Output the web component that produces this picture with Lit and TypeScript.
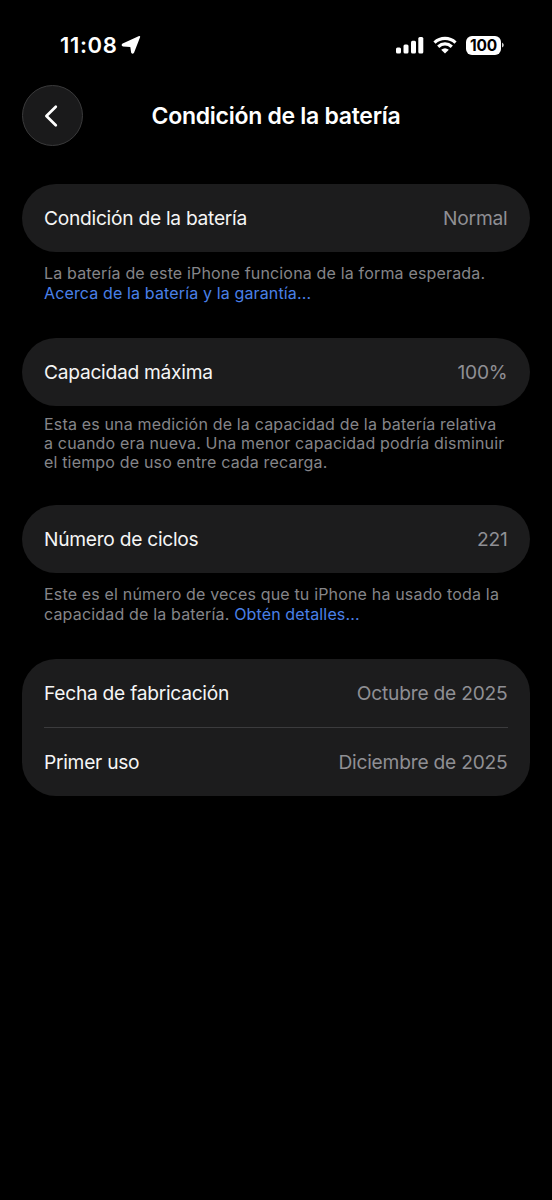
import { LitElement, html, css, nothing } from "lit";
import { customElement, property } from "lit/decorators.js";

const font = css`"Inter", "Liberation Sans", sans-serif`;

@customElement("status-bar")
class StatusBar extends LitElement {
  static styles = css`
    :host { display: flex; justify-content: space-between; align-items: center; height: 20px; padding: 35px 48px 0 60px; font-family: ${font}; color: #fff; }
    .left, .right { display: flex; align-items: center; }
    .time { font-size: 22px; line-height: 20px; font-weight: 600; letter-spacing: 0.65px; }
    .arrow { margin-left: 4px; }
    .wifi { margin: 0 9px 0 9px; }
    .battery { display: flex; align-items: center; }
    .level { width: 35px; height: 19px; border-radius: 6px; background: #fff; color: #000; font-size: 15.5px; line-height: 19px; font-weight: 700; text-align: center; letter-spacing: -0.2px; }
    svg { display: block; }
  `;
  render() {
    return html`
      <div class="left">
        <span class="time">11:08</span>
        <svg class="arrow" width="20" height="20" viewBox="0 0 20 20"><path d="M18.400 1.800 12.300 17.400Q11.600 18.400 10.900 17.400L10.100 11.900 9.400 11.200 2 10.600Q.9 9.900 2 9.200Z" fill="#fff" stroke="#fff" stroke-width="1.600" stroke-linejoin="round"/></svg>
      </div>
      <div class="right">
        <svg width="28" height="18" viewBox="0 0 28 18" fill="#fff"><rect x="0" y="11.500" width="5" height="6" rx="1.500"/><rect x="7.500" y="8.500" width="5" height="9" rx="1.500"/><rect x="15" y="4.700" width="5" height="12.800" rx="1.500"/><rect x="22.300" y="1" width="5" height="16.500" rx="1.500"/></svg>
        <svg class="wifi" width="24" height="18" viewBox="0 0 24 18" fill="none" stroke="#fff" stroke-width="3.200"><path d="M1.500 6.600Q6 2.400 12 2.400T22.500 6.600"/><path d="M5.200 10.700Q8.300 7.900 12 7.900T18.800 10.700"/><path d="M8.200 13.700Q12 10.700 15.800 13.700L12 17.500Z" fill="#fff" stroke="none"/></svg>
        <div class="battery"><span class="level">100</span><svg width="3" height="8" viewBox="0 0 3 8"><path d="M1 1.500Q2.800 2.500 2.800 4T1 6.500Z" fill="#ccc"/></svg></div>
      </div>`;
  }
}

@customElement("nav-header")
class NavHeader extends LitElement {
  static styles = css`
    :host { display: grid; grid-template-columns: 61px 1fr 61px; align-items: center; margin: 30px 22px 0; height: 61px; font-family: ${font}; color: #fff; }
    .back { box-sizing: border-box; width: 61px; height: 61px; border: 1px solid #3a3a3b; border-radius: 50%; background: #1a1a1b; padding: 0; display: flex; align-items: center; justify-content: center; }
    .title { margin: 0; text-align: center; font-size: 23px; line-height: 28px; font-weight: 560; letter-spacing: -0.28px; white-space: nowrap; }
  `;
  render() {
    return html`
      <button class="back" aria-label="Atrás"><svg width="24" height="24" viewBox="0 0 24 24" fill="none" stroke="#fff" stroke-width="2.700" stroke-linecap="round" stroke-linejoin="round"><path d="M14.800 2.800 5.400 12l9.400 9.200"/></svg></button>
      <h1 class="title">Condición de la batería</h1>`;
  }
}

type Row = [string, string];

@customElement("settings-group")
class SettingsGroup extends LitElement {
  @property({ attribute: false }) rows: Row[] = [];
  @property({ attribute: false }) lines: string[] = [];
  @property() link = "";
  static styles = css`
    :host { display: block; font-family: ${font}; }
    .card { border-radius: 34px; background: #1c1c1d; padding: 0 22px; }
    .row { display: flex; justify-content: space-between; align-items: center; height: 68px; font-size: 19.200px; letter-spacing: -0.27px; color: #f5f5f5; }
    .row + .row { border-top: 1px solid #3b3b3d; }
    .value { color: #8f8f94; letter-spacing: -0.22px; padding-right: 0.500px; }
    .note { margin: var(--note-gap, 12.300px) 0 0 22px; font-size: 16px; line-height: 19.400px; color: #858589; white-space: nowrap; letter-spacing: 0.17px; }
    .line { display: block; }
    .link { color: #4a80e8; letter-spacing: 0.14px; }
  `;
  render() {
    const last = this.lines.length - 1;
    return html`
      <div class="card">${this.rows.map(([label, value]) => html`<div class="row"><span>${label}</span><span class="value">${value}</span></div>`)}</div>
      ${this.lines.length ? html`<div class="note">${this.lines.map((line, i) => html`<span class="line">${line}${i === last && this.link ? html`<span class="link">${this.link}</span>` : nothing}</span>`)}</div>` : nothing}`;
  }
}

@customElement("app-root")
class AppRoot extends LitElement {
  static styles = css`
    :host { display: block; width: 552px; height: 1200px; background: #000; overflow: hidden; }
    .groups { display: grid; grid-template-rows: 153.500px 167.500px 154px auto; padding: 38px 22px 0; }
    .compact { --note-gap: 9px; }
  `;
  render() {
    return html`
      <status-bar></status-bar>
      <nav-header></nav-header>
      <main class="groups">
        <settings-group .rows=${[["Condición de la batería", "Normal"]]} .lines=${["La batería de este iPhone funciona de la forma esperada.", ""]} link="Acerca de la batería y la garantía..."></settings-group>
        <settings-group class="compact" .rows=${[["Capacidad máxima", "100%"]]} .lines=${["Esta es una medición de la capacidad de la batería relativa", "a cuando era nueva. Una menor capacidad podría disminuir", "el tiempo de uso entre cada recarga."]}></settings-group>
        <settings-group .rows=${[["Número de ciclos", "221"]]} .lines=${["Este es el número de veces que tu iPhone ha usado toda la", "capacidad de la batería. "]} link="Obtén detalles..."></settings-group>
        <settings-group .rows=${[["Fecha de fabricación", "Octubre de 2025"], ["Primer uso", "Diciembre de 2025"]]}></settings-group>
      </main>`;
  }
}
